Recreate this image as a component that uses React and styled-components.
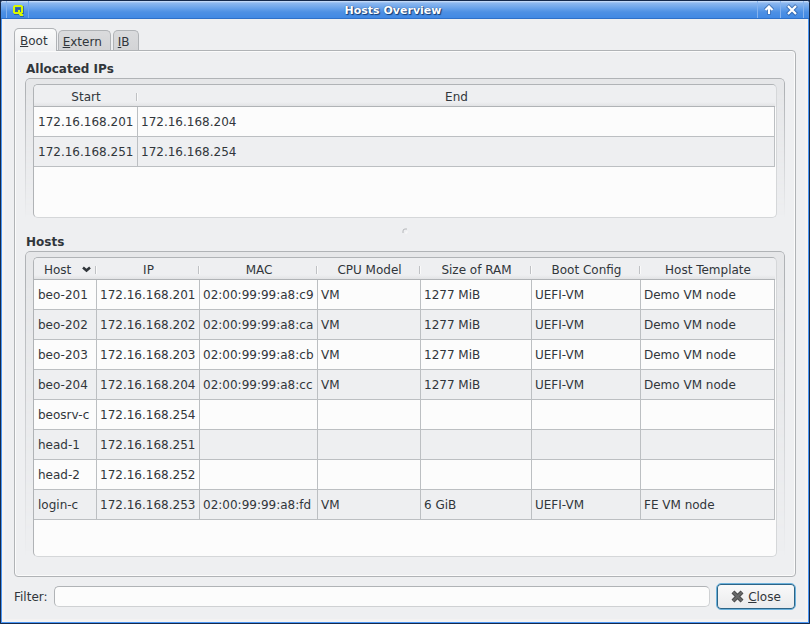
import React, { useState } from "react";
import styled, { createGlobalStyle, css } from "styled-components";

const GlobalStyle = createGlobalStyle`
  *, *::before, *::after { box-sizing: border-box; }
  body {
    margin: 0;
    background: #10284e;
    color: #31363b;
    font: 12px/16px "DejaVu Sans", sans-serif;
  }
  button, input { font: inherit; color: inherit; margin: 0; }
`;

const Window = styled.div`
  display: flex;
  flex-direction: column;
  min-height: 100vh;
  border: 1px solid #15294b;
  border-radius: 3px 3px 0 0;
  background: #eeeff1;
`;

const TitleBar = styled.header`
  display: flex;
  align-items: center;
  height: 18px;
  padding: 0 5px;
  border-radius: 2px 2px 0 0;
  border-bottom: 1px solid #2e70c8;
  background: linear-gradient(#d3e4fb 0, #8db8ef 2px, #6aa3ea 7px, #4d90e4 11px, #4189e4 17px);
`;

const titleSlot = css`
  display: flex;
  align-items: center;
  justify-content: center;
  width: 23px;
  height: 17px;
  padding: 0;
  border: 0;
  border-left: 1px solid #86b3ee;
  background: none;
`;

const AppMark = styled.span`
  ${titleSlot}
  padding: 2px 0 0 2px;
  border-right: 1px solid #6ea5ec;
`;

const TitleButton = styled.button`
  ${titleSlot}
  padding-top: 1px;
  &:last-child { border-right: 1px solid #86b3ee; width: 24px; }
`;

const Title = styled.h1`
  flex: 1;
  margin: 0;
  padding-top: 2px;
  color: #fff;
  font-size: 11px;
  line-height: 16px;
  text-align: center;
  text-shadow: 1px 1px 1px #123a72, 0 0 1px #123a72;
`;

const Body = styled.main`
  display: flex;
  flex: 1;
  flex-direction: column;
  padding: 9px;
  border: 3px solid #f3f2f2;
  border-top: 0;
`;

const Edge = styled.div`
  display: flex;
  flex: 1;
  flex-direction: column;
  border: 1px solid #4b97f5;
  border-top: 0;
`;

const TabList = styled.div`
  display: flex;
  align-items: flex-end;
  gap: 2px;
  height: 22px;
`;

const Tab = styled.button`
  position: relative;
  height: 20px;
  padding: 3px 8px 0 4px;
  border: 1px solid #b0b3b6;
  border-bottom: 0;
  border-radius: 5px 5px 0 0;
  background: linear-gradient(#dadbdd, #d3d4d6);
  line-height: 16px;
  text-align: left;

  &[aria-selected="true"] {
    z-index: 1;
    height: 23px;
    margin: 0 -1px -1px 0;
    padding: 2px 8px 0 5px;
    background: linear-gradient(#f9fafa, #eeeff1);
  }
`;

const Pane = styled.section`
  display: flex;
  flex: 1;
  flex-direction: column;
  padding: 10px 10px 19px;
  border: 1px solid #b0b3b6;
  border-radius: 0 4px 4px 4px;
  box-shadow: inset 0 0 0 1px #fbfbfb;
`;

const GroupTitle = styled.h2`
  margin: 0;
  padding-left: 1px;
  font-size: 12px;
  line-height: 17px;
`;

const Group = styled.div`
  position: relative;
  display: flex;
  flex: ${(p) => (p.$grow ? "1" : "none")};
  padding: 6px 8px 0;

  &::before {
    content: "";
    position: absolute;
    inset: 0;
    border: 1px solid #b0b3b6;
    border-bottom: 0;
    border-radius: 5px 5px 0 0;
    background: #e6e7e9;
    mask-image: linear-gradient(#000 10%, transparent);
  }
`;

const Frame = styled.div`
  position: relative;
  flex: 1;
  min-height: 134px;
  overflow: hidden;
  padding-right: 1px;
  border: 1px solid;
  border-color: #b0b3b6 #d5d7d9 #d5d7d9 #b0b3b6;
  border-radius: 5px;
  background: linear-gradient(#eeeff1 22px, #fcfcfc 22px);
`;

const Splitter = styled.div`
  display: flex;
  align-items: flex-end;
  justify-content: center;
  height: 16px;
`;

const Table = styled.table`
  width: 100%;
  table-layout: fixed;
  border-collapse: separate;
  border-spacing: 0;
`;

const Col = styled.col`
  width: ${(p) => (p.$width ? `${p.$width}px` : "auto")};
`;

const HeadCell = styled.th`
  height: 22px;
  padding: 3px 0 1px;
  border-bottom: 1px solid #b0b3b6;
  background:
    linear-gradient(#bfc1c4, #bfc1c4) right 1px top 8px / 1px 8px no-repeat,
    linear-gradient(#fafafa, #fafafa) right 0 top 8px / 1px 8px no-repeat,
    linear-gradient(#eeeff1 17px, #e2e3e5 21px);
  font-weight: 400;
  line-height: 16px;
  white-space: nowrap;

  &:last-child {
    background: linear-gradient(#eeeff1 17px, #e2e3e5 21px);
  }
`;

const SortButton = styled.button`
  display: flex;
  align-items: center;
  justify-content: space-between;
  width: 100%;
  padding: 0 6px 0 10px;
  border: 0;
  background: none;
`;

const Row = styled.tr`
  background: #fcfcfc;
  &:nth-child(even) { background: #eeeff1; }
`;

const Cell = styled.td`
  height: 30px;
  padding: 0 0 0 3px;
  border: solid #bcbfc2;
  border-width: 0 1px 1px 0;
  white-space: nowrap;

  &:first-child { padding-left: 4px; }
`;

const Footer = styled.footer`
  display: flex;
  align-items: center;
  gap: 6px;
  margin-top: 6px;
`;

const FilterInput = styled.input`
  flex: 1;
  min-width: 0;
  height: 21px;
  padding: 0 6px;
  border: 1px solid;
  border-color: #b0b3b6 #cfd1d3 #cfd1d3 #b0b3b6;
  border-radius: 5px;
  outline: 0;
  background: #fcfcfc;
`;

const CloseButton = styled.button`
  display: flex;
  align-items: center;
  justify-content: center;
  gap: 4px;
  width: 80px;
  height: 27px;
  padding: 0;
  border: 1px solid #6cb2dc;
  border-radius: 5px;
  background: linear-gradient(#fafafa, #e9eaec);
  box-shadow: inset 0 0 0 1px #2d6486;
`;

const AppIcon = () => (
  <svg width="12" height="12" viewBox="0 0 12 12" aria-hidden="true">
    <path d="M2 1h9v8H9v2h2v1H7v-2H1V9h1z" fill="#1d4a80" opacity=".6" />
    <path
      fillRule="evenodd"
      d="M1 0h8v1h1v7H9v1h1v2H7v-1H6V9H1V8H0V1h1zM2 2v5h3V5h2v2h1V2z"
      fill="#d8f800"
    />
    <path d="M3 3h4v1H4v2H3z" fill="#2f5f98" />
  </svg>
);

const UpIcon = () => (
  <svg width="12" height="12" viewBox="0 0 12 12" aria-hidden="true">
    <path d="M6 10.500V3M2.500 6 6 2.500 9.500 6" fill="none" stroke="#174483" strokeWidth="4" opacity=".5" />
    <path d="M6 10V3M2.500 6 6 2.500 9.500 6" fill="none" stroke="#fff" strokeWidth="2.200" />
  </svg>
);

const CrossIcon = () => (
  <svg width="12" height="12" viewBox="0 0 12 12" aria-hidden="true">
    <path d="m1.500 1.500 9 9M10.500 1.500l-9 9" fill="none" stroke="#174483" strokeWidth="4" opacity=".5" />
    <path d="m2 2 8 8M10 2l-8 8" fill="none" stroke="#fff" strokeWidth="2.200" />
  </svg>
);

const SortIcon = () => (
  <svg width="9" height="8" viewBox="0 0 9 8" aria-hidden="true">
    <path d="M1 1.500 4.500 4.500l3.500-3" fill="none" stroke="#31363b" strokeWidth="2.600" />
  </svg>
);

const CloseIcon = () => (
  <svg width="13" height="13" viewBox="0 0 13 13" aria-hidden="true">
    <path d="m2 2 9 9M11 2l-9 9" fill="none" stroke="#4c4d4f" strokeWidth="4.200" />
    <path d="m2 2 9 9M11 2l-9 9" fill="none" stroke="#68696a" strokeWidth="2" />
  </svg>
);

const GripIcon = () => (
  <svg width="6" height="6" viewBox="0 0 6 6" aria-hidden="true">
    <path d="M1 5V3q0-2 2-2h2" fill="none" stroke="#b4b6b9" />
    <path d="M5 3v2H3" fill="none" stroke="#fafafa" />
  </svg>
);

const Mnemonic = ({ text }) => (
  <span>
    <u>{text[0]}</u>
    {text.slice(1)}
  </span>
);

const ipColumns = [{ label: "Start", width: 104 }, { label: "End" }];
const ipRows = [
  ["172.16.168.201", "172.16.168.204"],
  ["172.16.168.251", "172.16.168.254"],
];

const hostColumns = [
  { label: "Host", width: 63, sorted: true },
  { label: "IP", width: 103 },
  { label: "MAC", width: 118 },
  { label: "CPU Model", width: 103 },
  { label: "Size of RAM", width: 111 },
  { label: "Boot Config", width: 109 },
  { label: "Host Template" },
];
const hostRows = [
  ["beo-201", "172.16.168.201", "02:00:99:99:a8:c9", "VM", "1277 MiB", "UEFI-VM", "Demo VM node"],
  ["beo-202", "172.16.168.202", "02:00:99:99:a8:ca", "VM", "1277 MiB", "UEFI-VM", "Demo VM node"],
  ["beo-203", "172.16.168.203", "02:00:99:99:a8:cb", "VM", "1277 MiB", "UEFI-VM", "Demo VM node"],
  ["beo-204", "172.16.168.204", "02:00:99:99:a8:cc", "VM", "1277 MiB", "UEFI-VM", "Demo VM node"],
  ["beosrv-c", "172.16.168.254", "", "", "", "", ""],
  ["head-1", "172.16.168.251", "", "", "", "", ""],
  ["head-2", "172.16.168.252", "", "", "", "", ""],
  ["login-c", "172.16.168.253", "02:00:99:99:a8:fd", "VM", "6 GiB", "UEFI-VM", "FE VM node"],
];

function DataTable({ columns, rows, labelledBy }) {
  return (
    <Frame>
      <Table aria-labelledby={labelledBy}>
        <colgroup>
          {columns.map((c) => (
            <Col key={c.label} $width={c.width} />
          ))}
        </colgroup>
        <thead>
          <tr>
            {columns.map((c) => (
              <HeadCell key={c.label} scope="col" aria-sort={c.sorted ? "ascending" : undefined}>
                {c.sorted ? (
                  <SortButton type="button">
                    {c.label}
                    <SortIcon />
                  </SortButton>
                ) : (
                  c.label
                )}
              </HeadCell>
            ))}
          </tr>
        </thead>
        <tbody>
          {rows.map((row) => (
            <Row key={row[0]}>
              {row.map((value, i) => (
                <Cell key={columns[i].label}>{value}</Cell>
              ))}
            </Row>
          ))}
        </tbody>
      </Table>
    </Frame>
  );
}

const tabs = ["Boot", "Extern", "IB"];

export default function App() {
  const [active, setActive] = useState("Boot");
  const [filter, setFilter] = useState("");

  return (
    <>
      <GlobalStyle />
      <Window>
        <TitleBar>
          <AppMark>
            <AppIcon />
          </AppMark>
          <Title>Hosts Overview</Title>
          <TitleButton type="button" aria-label="Maximize">
            <UpIcon />
          </TitleButton>
          <TitleButton type="button" aria-label="Close window">
            <CrossIcon />
          </TitleButton>
        </TitleBar>
        <Edge>
          <Body>
            <TabList role="tablist">
              {tabs.map((name) => (
                <Tab
                  key={name}
                  type="button"
                  role="tab"
                  aria-selected={name === active}
                  aria-controls="pane"
                  onClick={() => setActive(name)}
                >
                  <Mnemonic text={name} />
                </Tab>
              ))}
            </TabList>
            <Pane id="pane" role="tabpanel">
              <GroupTitle id="allocated">Allocated IPs</GroupTitle>
              <Group>
                <DataTable columns={ipColumns} rows={ipRows} labelledBy="allocated" />
              </Group>
              <Splitter role="separator">
                <GripIcon />
              </Splitter>
              <GroupTitle id="hosts">Hosts</GroupTitle>
              <Group $grow>
                <DataTable columns={hostColumns} rows={hostRows} labelledBy="hosts" />
              </Group>
            </Pane>
            <Footer>
              <label htmlFor="filter">Filter:</label>
              <FilterInput id="filter" value={filter} onChange={(e) => setFilter(e.target.value)} />
              <CloseButton type="button">
                <CloseIcon />
                <Mnemonic text="Close" />
              </CloseButton>
            </Footer>
          </Body>
        </Edge>
      </Window>
    </>
  );
}
